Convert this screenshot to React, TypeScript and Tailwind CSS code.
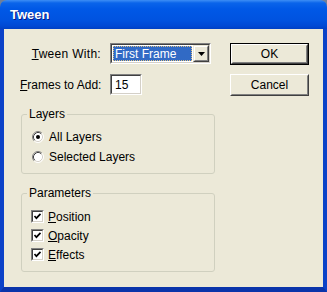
import React from "react";

const sunkenOuter =
  "border border-t-[#808080] border-l-[#808080] border-b-white border-r-white";
const sunkenInner =
  "border border-t-[#404040] border-l-[#404040] border-b-[#d4d0c8] border-r-[#d4d0c8]";

function Button({ label, isDefault }: { label: string; isDefault?: boolean }) {
  const face = (
    <div className="h-full border border-t-white border-l-white border-b-[#404040] border-r-[#404040]">
      <div className="h-full border border-t-[#ece9d8] border-l-[#ece9d8] border-b-[#808080] border-r-[#808080] flex items-center justify-center text-[12px] text-black">
        {label}
      </div>
    </div>
  );
  return (
    <div className={`w-[79px] h-[22px] ${isDefault ? "border border-black" : ""}`}>
      {face}
    </div>
  );
}

function Radio({ checked }: { checked?: boolean }) {
  return (
    <svg width="12" height="12" viewBox="0 0 12 12" className="shrink-0">
      <circle cx="6" cy="6" r="5" fill="#ffffff" />
      <path d="M2.11 9.89 A5.5 5.5 0 0 1 9.89 2.11" fill="none" stroke="#808080" />
      <path d="M9.89 2.11 A5.5 5.5 0 0 1 2.11 9.89" fill="none" stroke="#ffffff" />
      <path d="M2.82 9.18 A4.5 4.5 0 0 1 9.18 2.82" fill="none" stroke="#404040" />
      <path d="M9.18 2.82 A4.5 4.5 0 0 1 2.82 9.18" fill="none" stroke="#d4d0c8" />
      {checked && <circle cx="6" cy="6" r="2" fill="#000000" />}
    </svg>
  );
}

function Checkbox() {
  return (
    <div className={`w-[13px] h-[13px] shrink-0 ${sunkenOuter}`}>
      <div className={`w-full h-full bg-white ${sunkenInner}`}>
        <svg width="9" height="9" viewBox="0 0 9 9" className="block">
          <polyline points="1.5,4 3.4,6.2 7.5,1.8" fill="none" stroke="#000" strokeWidth="1.7" />
        </svg>
      </div>
    </div>
  );
}

function Accel({ first, rest }: { first: string; rest: string }) {
  return (
    <span>
      <span className="underline underline-offset-1">{first}</span>
      {rest}
    </span>
  );
}

export default function App() {
  return (
    <div className="w-[327px] h-[292px] bg-[#6f7f99] font-['Liberation_Sans',Arial,sans-serif] text-[12px] text-black">
      <div className="w-full h-full flex flex-col rounded-t-[7px] overflow-hidden">
        {/* Title bar */}
        <div className="h-[29px] shrink-0 flex items-center pl-[10px] bg-[linear-gradient(to_bottom,#3d8ef5_0px,#0a64ea_3px,#0058e6_9px,#0053e0_20px,#0049d4_26px,#0040c4_29px)]">
          <span className="text-white font-bold text-[13px] [text-shadow:1px_1px_#0a1883]">
            Tween
          </span>
        </div>

        {/* Body */}
        <div className="flex-1 bg-[#ece9d8] border-l-[4px] border-r-[4px] border-b-[5px] border-l-[#0b42c8] border-r-[#0b42c8] border-b-[#0a34aa] flex pt-[14px] pl-[16px] pr-[14px]">
          <div className="w-[195px] flex flex-col">
            <div className="h-[21px] flex items-center">
              <div className="w-[81px] text-right whitespace-nowrap tracking-[0.3px]">
                <Accel first="T" rest="ween With:" />
              </div>
              <div className={`ml-[9px] w-[101px] h-[21px] ${sunkenOuter}`}>
                <div className={`h-full bg-white flex ${sunkenInner}`}>
                  <div className="flex-1 m-[1px] border border-dotted border-[#e0c080] bg-[#316ac5] text-white flex items-center pl-[1px] whitespace-nowrap">
                    First Frame
                  </div>
                  <div className="w-[16px] h-full border border-t-[#ece9d8] border-l-[#ece9d8] border-b-[#404040] border-r-[#404040]">
                    <div className="h-full bg-[#ece9d8] border border-t-white border-l-white border-b-[#808080] border-r-[#808080] flex items-center justify-center">
                      <svg width="7" height="4" viewBox="0 0 7 4">
                        <path d="M0 0 H7 L3.5 4 Z" fill="#000" />
                      </svg>
                    </div>
                  </div>
                </div>
              </div>
            </div>

            <div className="mt-[10px] h-[21px] flex items-center">
              <div className="w-[81px] text-right whitespace-nowrap">
                <Accel first="F" rest="rames to Add:" />
              </div>
              <div className={`ml-[9px] w-[32px] h-[21px] ${sunkenOuter}`}>
                <div className={`h-full bg-white flex items-center pl-[3px] ${sunkenInner}`}>
                  15
                </div>
              </div>
            </div>

            <fieldset className="mt-[12px] ml-[1px] w-[194px] border border-[#d0d0bf] rounded-[3px] pb-[6px]">
              <legend className="ml-[5px] px-[2px] leading-[14px]">Layers</legend>
              <div className="pt-[6px] pl-[10px]">
                <div className="h-[20px] flex items-center gap-[5px]">
                  <Radio checked />
                  <span>All Layers</span>
                </div>
                <div className="h-[20px] flex items-center gap-[5px]">
                  <Radio />
                  <span>Selected Layers</span>
                </div>
              </div>
            </fieldset>

            <fieldset className="mt-[12px] ml-[1px] w-[194px] border border-[#d0d0bf] rounded-[3px] pb-[7px]">
              <legend className="ml-[5px] px-[2px] leading-[14px]">Parameters</legend>
              <div className="pt-[7px] pl-[9px]">
                <div className="h-[19px] flex items-center gap-[4px]">
                  <Checkbox />
                  <Accel first="P" rest="osition" />
                </div>
                <div className="h-[19px] flex items-center gap-[4px]">
                  <Checkbox />
                  <Accel first="O" rest="pacity" />
                </div>
                <div className="h-[19px] flex items-center gap-[4px]">
                  <Checkbox />
                  <Accel first="E" rest="ffects" />
                </div>
              </div>
            </fieldset>
          </div>

          <div className="ml-auto w-[79px] flex flex-col gap-[9px]">
            <Button label="OK" isDefault />
            <Button label="Cancel" />
          </div>
        </div>
      </div>
    </div>
  );
}
